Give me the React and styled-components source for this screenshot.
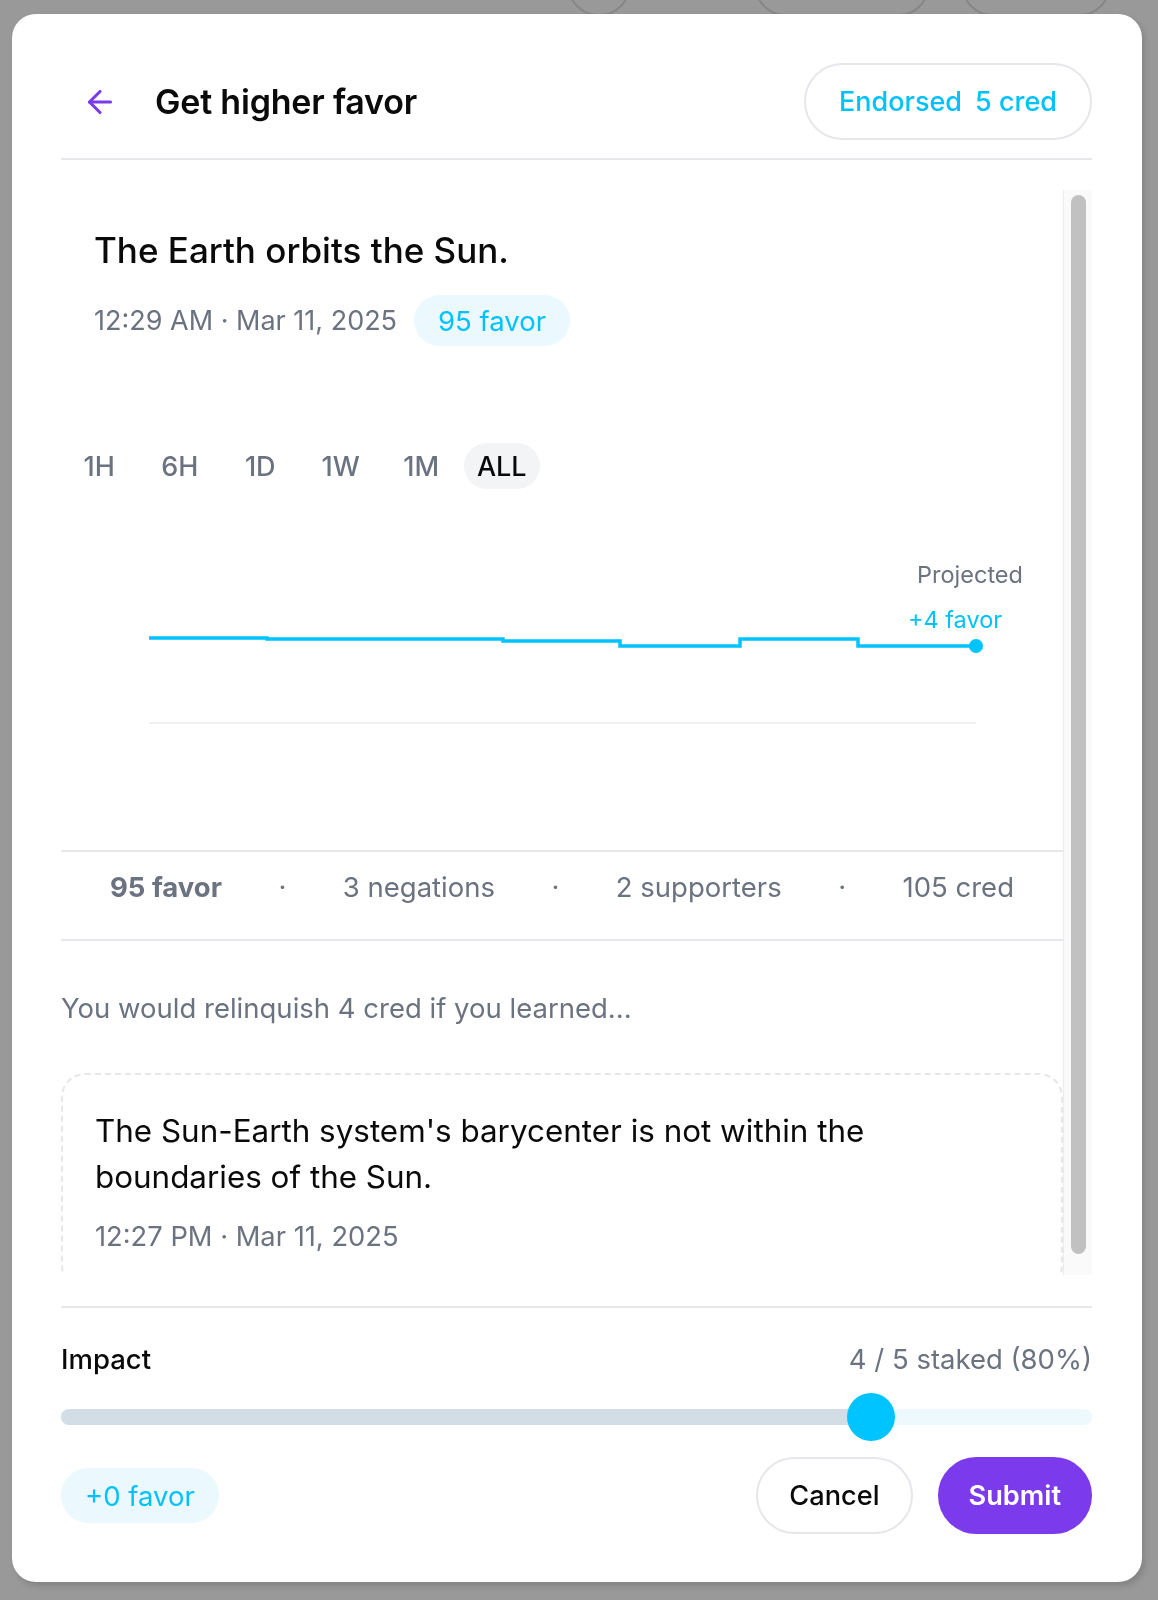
import React from "react";
import styled, { createGlobalStyle } from "styled-components";
import { ArrowLeft } from "lucide-react";

const CYAN = "#00c2fb";
const GRAY = "#6b7280";
const INK = "#0a0a0a";
const LINE = "#e5e7eb";

const GlobalStyle = createGlobalStyle`
  html, body {
    margin: 0;
    background: #999999;
    font-family: Inter, "Noto Sans", sans-serif;
  }
  * { box-sizing: border-box; }
`;

/* the page behind the dimmed backdrop, only its top edge peeks out */
const PageBehind = styled.div`
  height: 1600px;
  overflow: hidden;
`;

const BehindBar = styled.div`
  display: flex;
  align-items: center;
  gap: 33px;
  padding-left: 568px;
  margin-top: -44px;
`;

const BehindButton = styled.div`
  width: ${(p) => p.$w}px;
  height: 60px;
  border-radius: 999px;
  border: 2px solid rgba(0, 0, 0, 0.12);
  margin-right: ${(p) => p.$gap || 0}px;
`;

const Overlay = styled.div`
  position: fixed;
  inset: 0;
  padding: 14px 16px 18px 12px;
`;

const Modal = styled.div`
  height: 1568px;
  background: #fff;
  border-radius: 24px;
  padding: 49px 50px 48px 49px;
  display: flex;
  flex-direction: column;
  box-shadow: 3px 4px 6px rgba(0, 0, 0, 0.14);
`;

const Header = styled.div`
  display: flex;
  align-items: center;
  height: 77px;
  padding-left: 21px;
`;

const BackButton = styled.button`
  border: none;
  background: none;
  padding: 0;
  color: #7c3aed;
  display: flex;
  cursor: pointer;
`;

const Title = styled.h1`
  flex: 1;
  margin: 0 0 0 37px;
  font-size: 34px;
  font-weight: 600;
  color: ${INK};
  letter-spacing: -0.2px;
`;

const EndorseButton = styled.button`
  height: 77px;
  padding: 0 33px;
  border: 2px solid ${LINE};
  border-radius: 999px;
  background: #fff;
  color: ${CYAN};
  font-family: inherit;
  font-size: 27px;
  font-weight: 500;
  display: flex;
  align-items: center;
  gap: 13px;
`;

const Divider = styled.div`
  height: 2px;
  background: ${LINE};
  margin-top: ${(p) => p.$top || 0}px;
  flex-shrink: 0;
`;

const ScrollArea = styled.div`
  margin-top: 30px;
  flex: 1;
  min-height: 0;
  display: flex;
`;

const ScrollContent = styled.div`
  flex: 1;
  overflow: hidden;
`;

const ScrollTrack = styled.div`
  width: 29px;
  flex-shrink: 0;
  background: #fafafa;
  border-left: 1px solid #ececec;
  padding: 5px 6px 21px 7px;
`;

const Thumb = styled.div`
  height: 100%;
  background: #c1c1c1;
  border-radius: 8px;
`;

const PointSection = styled.div`
  padding: 38px 33px 0;
`;

const Statement = styled.p`
  margin: 0;
  font-size: 35px;
  line-height: 44px;
  font-weight: 500;
  color: ${INK};
`;

const MetaRow = styled.div`
  display: flex;
  align-items: center;
  gap: 17px;
  margin-top: 23px;
`;

const MetaText = styled.span`
  font-size: ${(p) => p.$size || 27.5}px;
  color: ${GRAY};
`;

const Pill = styled.span`
  height: ${(p) => p.$h}px;
  padding: 0 24px;
  display: inline-flex;
  align-items: center;
  border-radius: 999px;
  background: #ebf9ff;
  color: ${CYAN};
  font-size: 27.5px;
`;

const Tabs = styled.div`
  display: flex;
  gap: 4px;
  margin-top: 97px;
`;

const Tab = styled.button`
  width: 76.5px;
  height: 46px;
  padding: 0;
  border: none;
  border-radius: 999px;
  font-family: inherit;
  font-size: 27px;
  font-weight: 500;
  text-align: center;
  color: ${(p) => (p.$active ? INK : GRAY)};
  background: ${(p) => (p.$active ? "#f3f4f6" : "transparent")};
`;

const Chart = styled.svg`
  display: block;
  font-family: Inter, sans-serif;
`;

const Stats = styled.div`
  height: 91px;
  border-top: 2px solid ${LINE};
  border-bottom: 2px solid ${LINE};
  display: flex;
  align-items: center;
  justify-content: space-between;
  padding: 0 49px 17px 49px;
  font-size: 27.5px;
  color: ${GRAY};
`;

const Stat = styled.span`
  font-weight: ${(p) => (p.$strong ? 700 : 400)};
`;

const Relinquish = styled.p`
  margin: 49px 0 0;
  font-size: 27.5px;
  line-height: 36px;
  color: ${GRAY};
`;

const Card = styled.div`
  margin-top: 47px;
  border: 2px dashed ${LINE};
  border-radius: 24px;
  padding: 33px 32px;
`;

const CardText = styled.p`
  margin: 0;
  font-size: 31.4px;
  line-height: 46px;
  color: ${INK};
`;

const CardDate = styled.div`
  margin-top: 19px;
  font-size: 27.3px;
  line-height: 36px;
  color: ${GRAY};
`;

const ImpactRow = styled.div`
  margin-top: 33px;
  display: flex;
  justify-content: space-between;
  line-height: 36px;
  font-size: 27.5px;
`;

const ImpactLabel = styled.span`
  color: ${INK};
  font-weight: 500;
`;

const Slider = styled.div`
  position: relative;
  margin-top: 16px;
  height: 48px;
`;

const Track = styled.div`
  position: absolute;
  left: 0;
  right: 0;
  top: 16px;
  height: 16px;
  border-radius: 8px;
  background: #eef9fe;
  overflow: hidden;
`;

const Fill = styled.div`
  height: 100%;
  background: #d3dde5;
`;

const Knob = styled.div`
  position: absolute;
  top: 0;
  width: 48px;
  height: 48px;
  border-radius: 50%;
  background: #00c4ff;
`;

const Actions = styled.div`
  margin-top: 16px;
  display: flex;
  align-items: center;
  justify-content: space-between;
`;

const ButtonGroup = styled.div`
  display: flex;
  gap: 25px;
`;

const ActionButton = styled.button`
  height: 77px;
  padding: 0 ${(p) => (p.$primary ? 29 : 31)}px;
  border-radius: 999px;
  font-family: inherit;
  font-size: 27.2px;
  font-weight: ${(p) => (p.$primary ? 600 : 500)};
  border: 2px solid ${(p) => (p.$primary ? "#7c3aed" : LINE)};
  background: ${(p) => (p.$primary ? "#7c3aed" : "#fff")};
  color: ${(p) => (p.$primary ? "#fff" : INK)};
`;

const tabs = ["1H", "6H", "1D", "1W", "1M", "ALL"];
const stake = 0.8;

export default function App() {
  return (
    <>
      <GlobalStyle />
      <PageBehind>
        <BehindBar>
          <BehindButton $w={62} $gap={92} />
          <BehindButton $w={174} />
          <BehindButton $w={148} />
        </BehindBar>
      </PageBehind>
      <Overlay>
        <Modal>
          <Header>
            <BackButton>
              <ArrowLeft size={36} strokeWidth={2.1} />
            </BackButton>
            <Title>Get higher favor</Title>
            <EndorseButton>
              <span>Endorsed</span>
              <span>5 cred</span>
            </EndorseButton>
          </Header>
          <Divider $top={18} />

          <ScrollArea>
            <ScrollContent>
              <PointSection>
                <Statement>The Earth orbits the Sun.</Statement>
                <MetaRow>
                  <MetaText $size={27}>12:29 AM · Mar 11, 2025</MetaText>
                  <Pill $h={51}>95 favor</Pill>
                </MetaRow>
              </PointSection>

              <Tabs>
                {tabs.map((t) => (
                  <Tab key={t} $active={t === "ALL"}>
                    {t}
                  </Tab>
                ))}
              </Tabs>

              <Chart width="1003" height="361" viewBox="0 0 1003 361">
                <line x1="88" y1="234" x2="915" y2="234" stroke="#f1f1f3" strokeWidth="2" />
                <path
                  d="M88 149 H206 V150 H442 V152 H559 V157 H679 V150 H797 V157 H915"
                  fill="none"
                  stroke="#00c4ff"
                  strokeWidth="3.5"
                />
                <circle cx="915" cy="157" r="7" fill="#00c4ff" />
                <text x="909" y="94" textAnchor="middle" fontSize="23.5" fill={GRAY}>
                  Projected
                </text>
                <text x="894" y="139" textAnchor="middle" fontSize="23.5" fill={CYAN}>
                  +4 favor
                </text>
              </Chart>

              <Stats>
                <Stat $strong>95 favor</Stat>
                <Stat>·</Stat>
                <Stat>3 negations</Stat>
                <Stat>·</Stat>
                <Stat>2 supporters</Stat>
                <Stat>·</Stat>
                <Stat>105 cred</Stat>
              </Stats>

              <Relinquish>You would relinquish 4 cred if you learned...</Relinquish>

              <Card>
                <CardText>
                  The Sun-Earth system's barycenter is not within the
                  <br />
                  boundaries of the Sun.
                </CardText>
                <CardDate>12:27 PM · Mar 11, 2025</CardDate>
              </Card>
            </ScrollContent>
            <ScrollTrack>
              <Thumb />
            </ScrollTrack>
          </ScrollArea>

          <Divider $top={31} />
          <ImpactRow>
            <ImpactLabel>Impact</ImpactLabel>
            <MetaText>4 / 5 staked (80%)</MetaText>
          </ImpactRow>
          <Slider>
            <Track>
              <Fill style={{ width: `calc(24px + ${stake} * (100% - 48px))` }} />
            </Track>
            <Knob style={{ left: `calc(${stake} * (100% - 48px))` }} />
          </Slider>
          <Actions>
            <Pill $h={55}>+0 favor</Pill>
            <ButtonGroup>
              <ActionButton>Cancel</ActionButton>
              <ActionButton $primary>Submit</ActionButton>
            </ButtonGroup>
          </Actions>
        </Modal>
      </Overlay>
    </>
  );
}
